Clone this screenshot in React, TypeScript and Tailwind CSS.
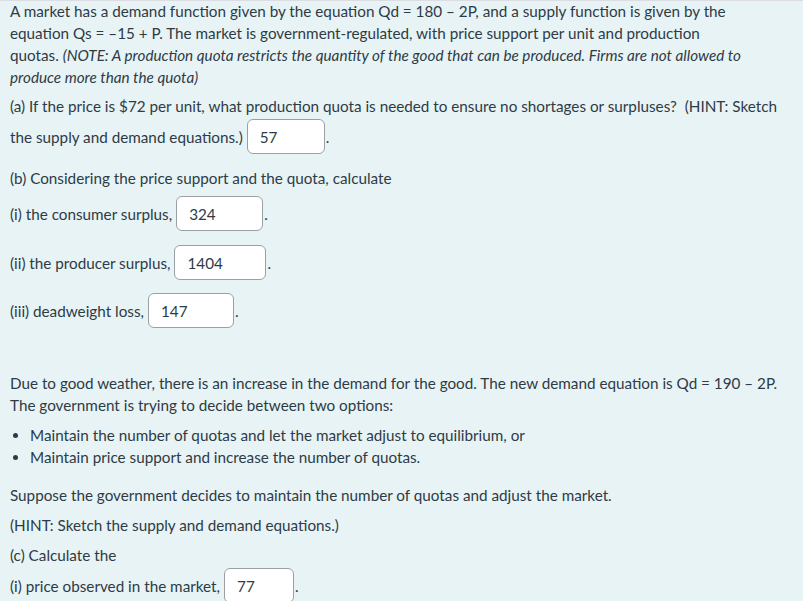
const font = { fontFamily: "Lato, 'Noto Sans', sans-serif" };

function Blank({ value, w }: { value: string; w: string }) {
  return (
    <span className="inline-flex items-center">
      <span
        className={`ml-[4px] flex h-[35px] items-center rounded-[6px] border border-[#9aa1a6] bg-white pl-[12px] text-[#2d3b45] ${w}`}
      >
        {value}
      </span>
      <span className="ml-[1px] self-end pb-[6px]">.</span>
    </span>
  );
}

export default function App() {
  return (
    <div
      style={font}
      className="min-h-[601px] w-[803px] border-t border-[#dcdde2] bg-[#e8f3f6] pl-[10px] pr-[10px] text-[15.25px] leading-[22px] text-[#2d3b45]"
    >
      <p className="mt-[-1px]">
        A market has a demand function given by the equation Qd = 180 – 2P, and a supply function is given by the
        <br />
        equation Qs = –15 + P. The market is government-regulated, with price support per unit and production
        <br />
        quotas.{" "}
        <em>
          (NOTE: A production quota restricts the quantity of the good that can be produced. Firms are not allowed to
          <br />
          produce more than the quota)
        </em>
      </p>

      <p className="mt-[7px] whitespace-nowrap">
        (a) If the price is $72 per unit, what production quota is needed to ensure no shortages or surpluses?&nbsp; (HINT: Sketch
      </p>
      <div className="mt-[2px] flex h-[35px] items-center">
        the supply and demand equations.)
        <Blank value="57" w="w-[78px]" />
      </div>

      <p className="mt-[13px]">(b) Considering the price support and the quota, calculate</p>
      <div className="mt-[7px] flex h-[35px] items-center">
        (i) the consumer surplus,
        <Blank value="324" w="w-[87px]" />
      </div>
      <div className="mt-[14px] flex h-[35px] items-center">
        (ii) the producer surplus,
        <Blank value="1404" w="w-[92px]" />
      </div>
      <div className="mt-[13px] flex h-[35px] items-center">
        (iii) deadweight loss,
        <Blank value="147" w="w-[86px]" />
      </div>

      <p className="mt-[44px]">
        Due to good weather, there is an increase in the demand for the good. The new demand equation is Qd = 190 – 2P.
        <br />
        The government is trying to decide between two options:
      </p>
      <ul className="mt-[8px] list-disc pl-[20px]">
        <li>Maintain the number of quotas and let the market adjust to equilibrium, or</li>
        <li>Maintain price support and increase the number of quotas.</li>
      </ul>

      <p className="mt-[16px]">Suppose the government decides to maintain the number of quotas and adjust the market.</p>
      <p className="mt-[8px]">(HINT: Sketch the supply and demand equations.)</p>
      <p className="mt-[8px]">(c) Calculate the</p>
      <div className="mt-[2px] flex h-[35px] items-center">
        (i) price observed in the market,
        <Blank value="77" w="w-[70px]" />
      </div>
    </div>
  );
}
